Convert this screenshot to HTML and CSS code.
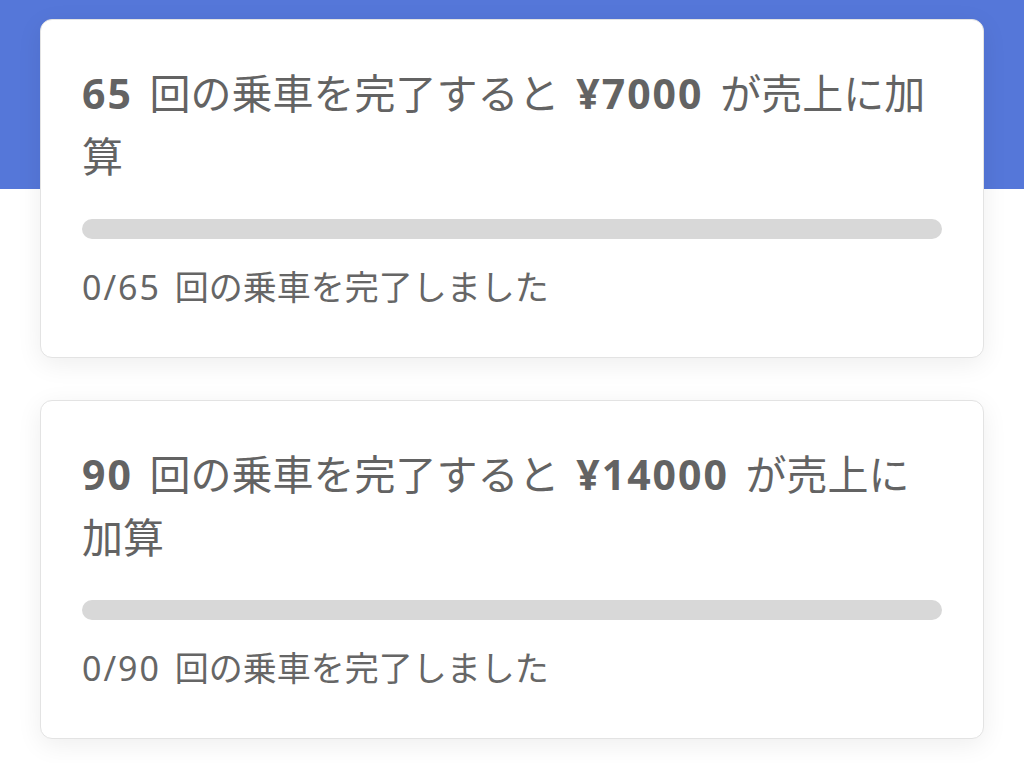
FILE: index.html
```html
<!DOCTYPE html>
<html lang="ja">
<head>
<meta charset="UTF-8">
<meta name="viewport" content="width=device-width, initial-scale=1.0">
<title>乗車ボーナス</title>
<link rel="stylesheet" href="styles.css">
</head>
<body>

<div class="page">
  <!-- Bonus list -->
  <div class="bonus-list">
    <div class="card">
      <div class="card-title"><b>65</b> 回の乗車を完了すると <b>¥7000</b> が売上に加算</div>
      <div class="progress"><div class="progress-fill" style="width: 0%"></div></div>
      <div class="card-sub"><span class="count">0/65</span> 回の乗車を完了しました</div>
    </div>

    <div class="card">
      <div class="card-title"><b>90</b> 回の乗車を完了すると <b>¥14000</b> が売上に加算</div>
      <div class="progress"><div class="progress-fill" style="width: 0%"></div></div>
      <div class="card-sub"><span class="count">0/90</span> 回の乗車を完了しました</div>
    </div>
  </div>
</div>

</body>
</html>
```

FILE: styles.css
```css
body {
  font-family: "Noto Sans", "Noto Sans CJK JP", sans-serif;
  margin: 0;
  padding: 0;
  background-color: #fff;
  color: #666;
}
.page {
  min-height: 100vh;
  background: linear-gradient(#5577d9 0, #5577d9 189px, #fff 189px);
}
.bonus-list {
  display: flex;
  flex-direction: column;
  gap: 42px;
  padding: 19px 40px 40px;
}
.card {
  background-color: #fff;
  border: 1px solid #e3e3e3;
  border-radius: 12px;
  box-shadow: 0 6px 26px rgba(0, 0, 0, 0.07);
  padding: 42px 41px 44px;
}
.card-title {
  font-size: 41px;
  line-height: 63px;
  color: #636363;
  word-spacing: 6px;
}
.card-title b {
  font-weight: 700;
  letter-spacing: 2px;
}
.progress {
  height: 20px;
  margin-top: 31px;
  border-radius: 10px;
  background-color: #d8d8d8;
  overflow: hidden;
}
.progress-fill {
  height: 100%;
  background-color: #5577d9;
}
.card-sub {
  margin-top: 23px;
  font-size: 34px;
  line-height: 51px;
  color: #666;
  word-spacing: 5px;
}
.card-sub .count {
  letter-spacing: 2px;
}
```
